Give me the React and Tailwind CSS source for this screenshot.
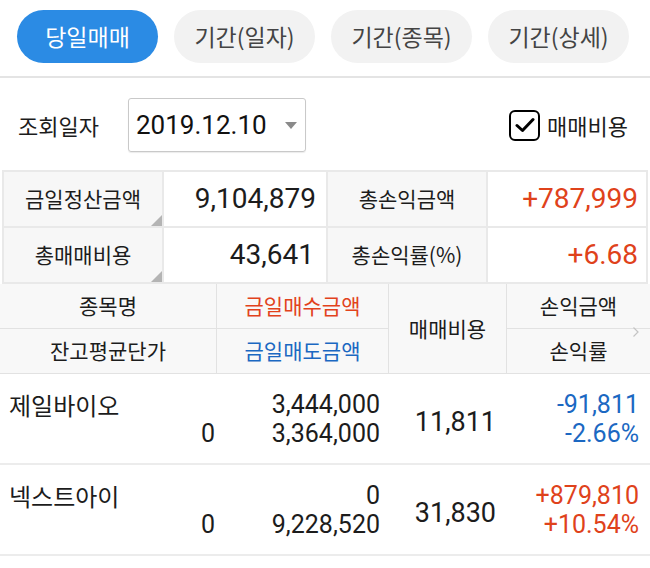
import { useState } from 'react';

const tabs = ['당일매매', '기간(일자)', '기간(종목)', '기간(상세)'];

const rows = [
  { name: '제일바이오', avg: '0', buy: '3,444,000', sell: '3,364,000', fee: '11,811', pl: '-91,811', rate: '-2.66%', up: false },
  { name: '넥스트아이', avg: '0', buy: '0', sell: '9,228,520', fee: '31,830', pl: '+879,810', rate: '+10.54%', up: true },
];

function Corner() {
  return (
    <svg className="absolute right-0 bottom-0" width="11" height="11" viewBox="0 0 11 11">
      <path d="M11 0 L11 11 L0 11 Z" fill="#b4b4b4" />
    </svg>
  );
}

export default function App() {
  const [active, setActive] = useState(0);
  const [withFee, setWithFee] = useState(true);

  return (
    <div className="w-[650px] h-[568px] bg-white overflow-hidden font-['Roboto','Noto_Sans_CJK_KR',sans-serif] text-[#1c1c1c]">
      {/* Tabs */}
      <div className="flex gap-[16px] px-[17px] pt-[10px] pb-[13px] border-b-2 border-[#e4e4e4]">
        {tabs.map((t, i) => (
          <button
            key={t}
            onClick={() => setActive(i)}
            className={`h-[53px] w-[141px] rounded-full text-[23px] font-['Noto_Sans_CJK_KR',sans-serif] ${
              i === active ? 'bg-[#2b8be4] text-white' : 'bg-[#f2f2f2] text-[#444]'
            }`}
          >
            {t}
          </button>
        ))}
      </div>

      {/* Date row */}
      <div className="flex items-center pl-[18px] pr-[22px] pt-[20px] pb-[18px]">
        <span className="text-[22px] font-['Noto_Sans_CJK_KR',sans-serif] w-[110px]">조회일자</span>
        <div className="h-[54px] w-[178px] border-[1.5px] border-[#c9c9c9] rounded-[3px] shadow-[0_1px_1px_rgba(0,0,0,0.08)] flex items-center pl-[7px] pr-[8px]">
          <span className="text-[26px] text-[#111] flex-1">2019.12.10</span>
          <svg width="12" height="7" viewBox="0 0 12 7">
            <path d="M0 0 L12 0 L6 7 Z" fill="#8a8a8a" />
          </svg>
        </div>
        <div className="ml-auto flex items-center gap-[7px]" onClick={() => setWithFee(!withFee)}>
          <div className="w-[31px] h-[31px] border-[2.5px] border-black rounded-[6px] flex items-center justify-center">
            {withFee && (
              <svg width="20" height="16" viewBox="0 0 20 16">
                <path d="M2 8.5 L7.5 13.5 L18 2.5" fill="none" stroke="#000" strokeWidth="3" strokeLinecap="round" strokeLinejoin="round" />
              </svg>
            )}
          </div>
          <span className="text-[22px] font-['Noto_Sans_CJK_KR',sans-serif]">매매비용</span>
        </div>
      </div>

      {/* Summary */}
      <div className="mx-[2px] grid grid-cols-[158px_162px_158px_1fr] grid-rows-[54px_54px] gap-[2px] bg-[#e9e9e9] border-2 border-[#e9e9e9]">
        <div className="relative bg-[#f7f7f7] flex items-center justify-center text-[21px] font-['Noto_Sans_CJK_KR',sans-serif]">
          금일정산금액
          <Corner />
        </div>
        <div className="bg-white flex items-center justify-end pr-[10px] text-[28px]">9,104,879</div>
        <div className="bg-[#f7f7f7] flex items-center justify-center text-[21px] font-['Noto_Sans_CJK_KR',sans-serif]">총손익금액</div>
        <div className="bg-white flex items-center justify-end pr-[8px] text-[28px] text-[#df421b]">+787,999</div>
        <div className="relative bg-[#f7f7f7] flex items-center justify-center text-[21px] font-['Noto_Sans_CJK_KR',sans-serif]">
          총매매비용
          <Corner />
        </div>
        <div className="bg-white flex items-center justify-end pr-[12px] text-[28px]">43,641</div>
        <div className="bg-[#f7f7f7] flex items-center justify-center text-[21px] font-['Noto_Sans_CJK_KR',sans-serif]">총손익률(%)</div>
        <div className="bg-white flex items-center justify-end pr-[8px] text-[28px] text-[#df421b]">+6.68</div>
      </div>

      {/* Header */}
      <div className="relative grid grid-cols-[216px_171px_117px_1fr] grid-rows-[44px_44px] gap-px bg-[#e2e2e2] border-b border-[#e2e2e2] text-[21px] font-['Noto_Sans_CJK_KR',sans-serif]">
        <div className="bg-[#f8f8f8] flex items-center justify-center">종목명</div>
        <div className="bg-[#f8f8f8] flex items-center justify-center text-[#e2421c]">금일매수금액</div>
        <div className="row-span-2 bg-[#f8f8f8] flex items-center justify-center">매매비용</div>
        <div className="bg-[#f8f8f8] flex items-center justify-center">손익금액</div>
        <div className="bg-[#f8f8f8] flex items-center justify-center">잔고평균단가</div>
        <div className="bg-[#f8f8f8] flex items-center justify-center text-[#1b68c2]">금일매도금액</div>
        <div className="bg-[#f8f8f8] flex items-center justify-center">손익률</div>
        <svg className="absolute right-[11px] top-[43px]" width="6" height="10" viewBox="0 0 6 10">
          <path d="M0.5 0.5 L5 5 L0.5 9.5" fill="none" stroke="#c4c4c4" strokeWidth="1.2" />
        </svg>
      </div>

      {/* Rows */}
      {rows.map((r) => (
        <div key={r.name} className="grid grid-cols-[216px_172px_117px_1fr] h-[91px] border-b-2 border-[#ececec]">
          <div className="flex flex-col pt-[16px] pr-[1px]">
            <span className="pl-[9px] text-[24px] leading-[29px] font-['Noto_Sans_CJK_KR',sans-serif]">{r.name}</span>
            <span className="text-right text-[25px] leading-[29px]">{r.avg}</span>
          </div>
          <div className="flex flex-col items-end pt-[16px] pr-[8px] text-[25px] leading-[29px]">
            <span>{r.buy}</span>
            <span>{r.sell}</span>
          </div>
          <div className="flex items-center justify-end pr-[9px] pt-[8px] text-[27px]">{r.fee}</div>
          <div className={`flex flex-col items-end pt-[16px] pr-[11px] text-[25px] leading-[29px] ${r.up ? 'text-[#df421b]' : 'text-[#1b68c2]'}`}>
            <span>{r.pl}</span>
            <span>{r.rate}</span>
          </div>
        </div>
      ))}
    </div>
  );
}
